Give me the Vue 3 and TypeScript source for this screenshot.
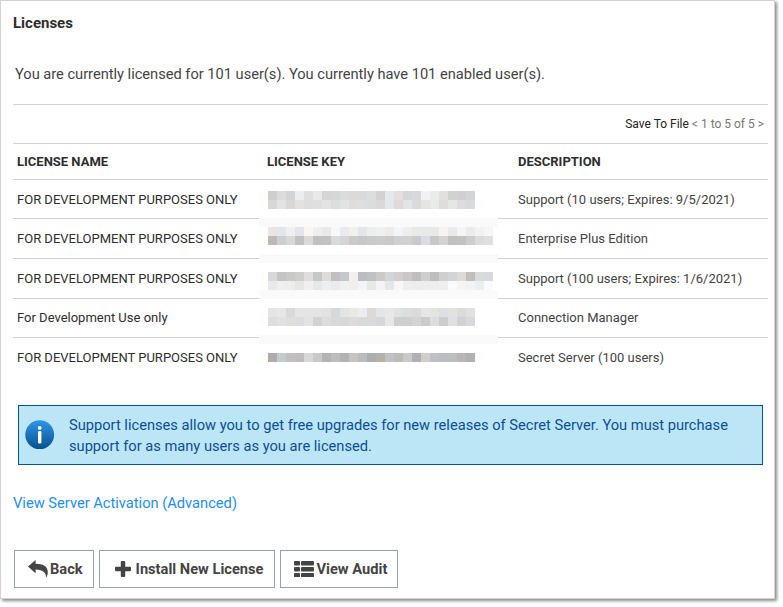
<script setup lang="ts">
interface License {
  name: string
  description: string
}

interface MosaicRow {
  y: number
  colors: string[]
}

const licenses: License[] = [
  { name: 'FOR DEVELOPMENT PURPOSES ONLY', description: 'Support (10 users; Expires: 9/5/2021)' },
  { name: 'FOR DEVELOPMENT PURPOSES ONLY', description: 'Enterprise Plus Edition' },
  { name: 'FOR DEVELOPMENT PURPOSES ONLY', description: 'Support (100 users; Expires: 1/6/2021)' },
  { name: 'For Development Use only', description: 'Connection Manager' },
  { name: 'FOR DEVELOPMENT PURPOSES ONLY', description: 'Secret Server (100 users)' },
]

// Redacted license keys: 9px cells, the first one sits in the left margin.
const cell = 9
const row = (y: number, list: string): MosaicRow => ({ y, colors: list.split(' ').map((c) => '#' + c) })
const mosaic: MosaicRow[] = [
  row(0, 'fefdfb ceced0 dbdbdb d3d3d5 ebedef dfdfdf eae9e5 d3d5d7 d6d6d6 dadbdd dcdad8 d8dadc dddddd d6d0d0 e4eaec e4dedc d5d6da d9d9d9 f1f2f4 ebebe9 e1e0dd d0d1d2 d0cfce d3d4d6'),
  row(9, 'fefefc d7d7d7 e1e4e2 d8d8d8 e3e2e1 dedede dfdfe0 e3e3e2 dddddd e2e4e3 dedcdd dededf dcdcdc d9d9d9 e3e8ea dedad9 e2e4e6 dadada e4e4e2 e9eaeb dedddb e6e6e4 dcdcdc d9dad9 fcfdff'),
  row(36, 'fefefe e8e6e4 e4e7ea f0f0f0 e5e6e9 f8f7f5 eeeeee e8e9eb f8f8f8 e9ebee f3f1ee e4e7ea edefee f0f0f0 eeecea f3f4f6 f0eeec e8e9e8 e8eaea e8eae9 f5f4f2 e8eaec f4f5f5 ececed f2f2f2 f5f6f6'),
  row(45, 'fffff8 bfb8b5 cad0d6 dcd8d1 c0c1c6 dadada c0c0c0 c2c2c2 d9dadd d5d5d5 cfc8c4 c4c8cd cacaca c9cbcd cac9c8 cfd0d2 d3d1cf cacaca dadce3 c8c9c7 d3d3d3 c1c0be c2c2c1 cccdd1 dddbda dfdfdf'),
  row(81, 'fffefb d8d8d8 c4c4c2 c9cac8 cecece dfdeda c6c8c6 dddcd8 c1c0bf c3c8ce f3efe9 bcbdc1 c0c1c4 cccac8 d2d6d9 d0cfcd c9c8c5 bebec1 cfcfce bebebc cfcfcf d3d4d7 dcdbd8 c0bfbd d9dbda d6dadd'),
  row(90, 'fdfdfc e9e9e9 efefef ededed e6e6e4 f0f0f0 e7e7e7 eceef1 ebeaec f0f1ef eef0ef f2f4f7 e8e8e7 f2f3f5 e7e7e7 f7f7f4 edeeef ededee ededed eeeeee eeefee fafafa f4f4f3 f3f3f4 edeef1 fafafa'),
  row(117, 'fefefe e5e5e4 e7e7e7 d9d9d9 e6e5e4 e4e4e4 e4e4e5 e2e2e0 d8d8d8 e1e5e8 ece8e2 ebedf2 dbdad8 e3e5e8 e8e8e6 dfe2e1 dcdddd dadbda e6e6e7 e6e4e1 dde0e2 e3e2df dbdbda dfe0e2'),
  row(126, 'fdfdfd dddee0 e2e1df dfdedd d9ddde e2e4e2 d2d2d3 dbdcdf dad9d7 d7d8da dfdbd6 d7d9db d9dadd d6d7d9 e7e7e6 cececf d0cfcf d5d4d3 cbcbcf dddddd cdcdcf dfe0e4 d2d2d1 d8d9dc'),
  row(162, 'fffdf8 b1aba7 c5cad1 c1c0be bfbebd d7d8da c9c9c9 b3b5b4 bdbdbb b3b4b2 c6c4c5 babdc0 adafaf b8afa6 bec2c8 b9bcba cec8c3 afb1b9 d3cdc7 bdc1c5 babec0 bebebe bab6b4 b0b1b6 fdfdfd'),
]
const bands: number[] = [27, 63, 99, 144]
const auditRows: number[] = [0, 6, 12]
</script>

<template>
  <div class="page">
    <main class="panel">
      <h1 class="title">Licenses</h1>
      <p class="summary">You are currently licensed for 101 user(s). You currently have 101 enabled user(s).</p>

      <div class="pager">
        <a class="save">Save To File</a>
        <span class="range">&lt; 1 to 5 of 5 &gt;</span>
      </div>

      <section class="table">
        <div class="row head">
          <span>LICENSE NAME</span>
          <span>LICENSE KEY</span>
          <span>DESCRIPTION</span>
        </div>
        <div v-for="(l, i) in licenses" :key="i" class="row">
          <span class="name">{{ l.name }}</span>
          <span></span>
          <span>{{ l.description }}</span>
        </div>
        <svg class="mosaic" width="239" height="171" viewBox="0 0 239 171" shape-rendering="crispEdges" aria-hidden="true">
          <rect v-for="b in bands" :key="b" x="0" :y="b" width="239" height="9" fill="#fafafa" />
          <g v-for="m in mosaic" :key="'r' + m.y">
            <rect v-for="(c, i) in m.colors" :key="i" :x="i * cell" :y="m.y" :width="cell" :height="cell" :fill="c" />
          </g>
        </svg>
      </section>

      <aside class="notice">
        <svg class="info" width="30" height="30" viewBox="0 0 30 30" aria-hidden="true">
          <defs>
            <linearGradient id="infoFill" x1="0" y1="0" x2="0" y2="1">
              <stop offset="0" stop-color="#2f95ea" />
              <stop offset="1" stop-color="#07508f" />
            </linearGradient>
          </defs>
          <circle cx="14.7" cy="14.7" r="14.4" fill="url(#infoFill)" />
          <circle cx="14.7" cy="7.9" r="1.9" fill="#fff" />
          <rect x="13" y="11" width="3.4" height="12.6" rx="1.3" fill="#fff" />
        </svg>
        <p>Support licenses allow you to get free upgrades for new releases of Secret Server. You must purchase<br />support for as many users as you are licensed.</p>
      </aside>

      <a class="activation">View Server Activation (Advanced)</a>

      <div class="actions">
        <button class="btn back">
          <svg width="20" height="18" viewBox="0 0 20 18" aria-hidden="true">
            <path d="M0 6.500 7.600 0v3.800C14.800 3.900 19.800 6 19.800 12c0 2.500-.7 4.400-1.800 5.800.4-4.800-2.600-8-10.400-8.200v3.600z" fill="#444" />
          </svg>
          <span>Back</span>
        </button>
        <button class="btn install">
          <svg width="16" height="16" viewBox="0 0 16 16" aria-hidden="true">
            <path d="M6.800 0h2.400q1 0 1 1v4.800H15q1 0 1 1v2.400q0 1-1 1h-4.800V15q0 1-1 1H6.800q-1 0-1-1v-4.800H1q-1 0-1-1V6.800q0-1 1-1h4.800V1q0-1 1-1z" fill="#444" />
          </svg>
          <span>Install New License</span>
        </button>
        <button class="btn audit">
          <svg width="20" height="16" viewBox="0 0 20 16" fill="#444" aria-hidden="true">
            <g v-for="y in auditRows" :key="y">
              <rect x="0" :y="y" width="6" height="4.400" rx="1" />
              <rect x="7" :y="y" width="13" height="4.400" rx="1" />
            </g>
          </svg>
          <span>View Audit</span>
        </button>
      </div>
    </main>
  </div>
</template>

<style>
body {
  margin: 0;
  background: #fff;
}
</style>

<style scoped>
.page {
  box-sizing: border-box;
  height: 607px;
  overflow: hidden;
}
.panel {
  box-sizing: border-box;
  width: 775px;
  height: 599px;
  padding: 0 6px 0 12px;
  border: 1px solid #d2d2d2;
  background: #fff;
  box-shadow: 2px 2px 3px rgba(0, 0, 0, 0.45);
  font-family: Roboto, 'Liberation Sans', sans-serif;
  color: #444;
}
.title {
  margin: 0;
  padding-top: 12px;
  font-size: 15px;
  line-height: 20px;
  font-weight: 700;
  color: #2e2e2e;
}
.summary {
  margin: 0;
  padding: 31px 0 20px 2px;
  font-size: 14.667px;
  line-height: 20px;
  letter-spacing: -0.02px;
  white-space: nowrap;
}
.pager {
  display: flex;
  justify-content: flex-end;
  gap: 3px;
  box-sizing: border-box;
  height: 39px;
  padding-right: 4px;
  border-top: 1px solid #d2d2d2;
  font-size: 12px;
  line-height: 38px;
}
.save {
  color: #222;
}
.range {
  color: #777;
}
.table {
  position: relative;
}
.row {
  display: grid;
  grid-template-columns: 250px 251px 1fr;
  box-sizing: border-box;
  height: 40px;
  padding-left: 4px;
  border-top: 1px solid #d2d2d2;
  font-size: 13px;
  line-height: 39px;
  white-space: nowrap;
}
.row:nth-child(2),
.row:nth-child(5) {
  height: 39px;
}
.row:nth-child(5) {
  line-height: 37px;
}
.name {
  color: #2e2e2e;
}
.head {
  height: 36px;
  line-height: 35px;
  font-weight: 700;
  color: #2e2e2e;
}
.mosaic {
  position: absolute;
  left: 246px;
  top: 48px;
}
.notice {
  display: flex;
  align-items: center;
  box-sizing: border-box;
  height: 60px;
  margin: 28px 5px 0;
  padding-left: 6px;
  border: 1px solid #00539f;
  background: #bce5f6;
  color: #0b4f97;
}
.info {
  flex: none;
}
.notice p {
  margin: 1px 0 0 14px;
  font-size: 14.667px;
  line-height: 21px;
  white-space: nowrap;
}
.activation {
  display: block;
  margin-top: 28px;
  font-size: 14.667px;
  line-height: 20px;
  color: #1d8df5;
}
.actions {
  display: flex;
  gap: 5px;
  margin: 37px 0 0 1px;
}
.btn {
  display: flex;
  align-items: center;
  box-sizing: border-box;
  height: 38px;
  padding: 0 0 0 13px;
  border: 1px solid #98a2aa;
  background: #fff;
  font-family: inherit;
  font-size: 14.667px;
  font-weight: 700;
  color: #444;
  white-space: nowrap;
}
.btn svg {
  flex: none;
}
.back {
  width: 80px;
}
.back span {
  margin-left: 2px;
}
.install {
  width: 176px;
  padding-left: 15px;
}
.install span {
  margin-left: 4.6px;
}
.audit {
  width: 118px;
}
.audit span {
  margin-left: 2.5px;
}
</style>
